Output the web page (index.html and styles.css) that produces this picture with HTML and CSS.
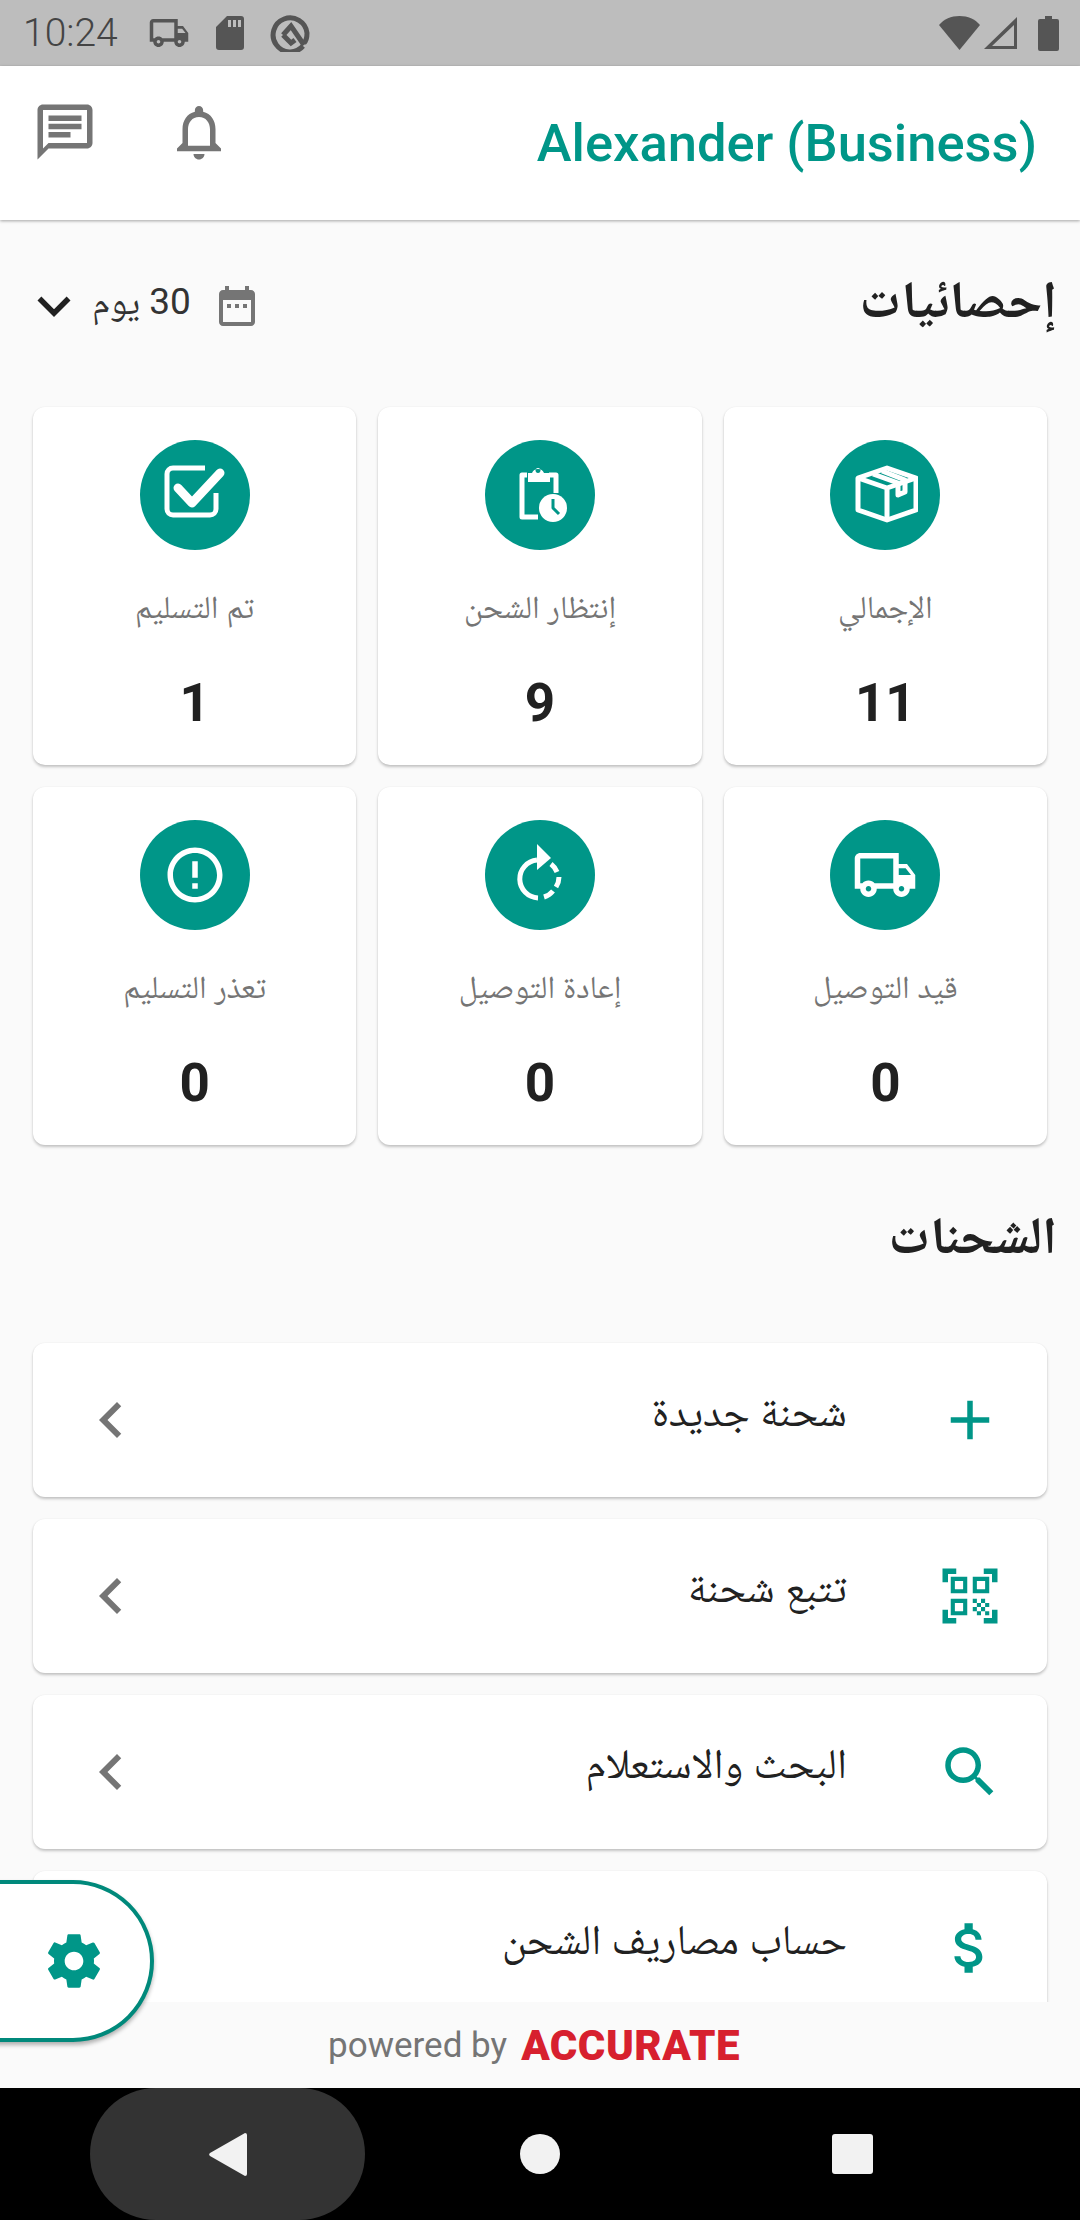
FILE: index.html
```html
<!DOCTYPE html>
<html lang="ar" dir="rtl">
<head>
  <meta charset="UTF-8" />
  <title>Alexander (Business)</title>
  <link rel="stylesheet" href="styles.css">
</head>
<body>
  <div class="status-bar" dir="ltr">
    <span class="status-time">10:24</span>
    <svg class="st-truck" viewBox="0 0 24 24"><path d="M20 8h-3V4H3c-1.1 0-2 .9-2 2v11h2c0 1.66 1.34 3 3 3s3-1.34 3-3h6c0 1.66 1.34 3 3 3s3-1.34 3-3h2v-5l-3-4zm-.5 1.5l1.96 2.5H17V9.5h2.5zM6 18c-.55 0-1-.45-1-1s.45-1 1-1 1 .45 1 1-.45 1-1 1zm2.22-3c-.55-.61-1.33-1-2.22-1s-1.67.39-2.22 1H3V6h12v9H8.22zM18 18c-.55 0-1-.45-1-1s.45-1 1-1 1 .45 1 1-.45 1-1 1z"/></svg>
    <svg class="st-sd" viewBox="0 0 28 34"><path d="M11 0h14a3 3 0 0 1 3 3v28a3 3 0 0 1-3 3H3a3 3 0 0 1-3-3V11zM12 4v7h3V4zm5 0v7h3V4zm5 0v7h3V4z" fill-rule="evenodd"/></svg>
    <svg class="st-at" viewBox="0 0 40 38"><g fill="none" stroke-width="5"><path d="M33 32A17 17 0 1 1 37 19c0 5-1 8-3 10"/><path d="M13 21L21 12L34 31M13 21L21 29L25 26"/></g></svg>
    <span class="status-gap"></span>
    <svg class="st-wifi" viewBox="0 0 41 34"><path d="M20.5 34L0 9C5 3 12 0 20.5 0S36 3 41 9z"/></svg>
    <svg class="st-signal" viewBox="0 0 33 32"><path d="M33 0v32H0zM30 8L8 29h22z" fill-rule="evenodd"/></svg>
    <svg class="st-battery" viewBox="0 0 21 35"><path d="M7 0h7v3h5a2 2 0 0 1 2 2v28a2 2 0 0 1-2 2H2a2 2 0 0 1-2-2V5a2 2 0 0 1 2-2h5z"/></svg>
  </div>

  <header class="app-header">
    <h1 class="app-title" dir="ltr">Alexander (Business)</h1>
    <div class="header-icons" dir="ltr">
      <svg class="icon-66 grey" viewBox="0 0 24 24"><path d="M20 2H4c-1.1 0-2 .9-2 2v18l4-4h14c1.1 0 2-.9 2-2V4c0-1.1-.9-2-2-2zm0 14H6l-2 2V4h16v12z"/><path d="M6 6h12v2H6zm0 3h12v2H6zm0 3h8v2H6z"/></svg>
      <svg class="icon-66 grey" viewBox="0 0 24 24"><path d="M12 22c1.1 0 2-.9 2-2h-4c0 1.1.9 2 2 2zm6-6v-5c0-3.07-1.63-5.64-4.5-6.32V4c0-.83-.67-1.5-1.5-1.5s-1.5.67-1.5 1.5v.68C7.64 5.36 6 7.92 6 11v5l-2 2v1h16v-1l-2-2zm-2 1H8v-6c0-2.48 1.51-4.5 4-4.5s4 2.02 4 4.5v6z"/></svg>
    </div>
  </header>

  <main class="content">
    <div class="section-head stats-head">
      <h2 class="section-title">إحصائيات</h2>
      <div class="range">
        <svg class="icon-48 grey" viewBox="0 0 24 24"><path d="M9 11H7v2h2v-2zm4 0h-2v2h2v-2zm4 0h-2v2h2v-2zm2-7h-1V2h-2v2H8V2H6v2H5c-1.11 0-1.99.9-1.99 2L3 20c0 1.1.89 2 2 2h14c1.1 0 2-.9 2-2V6c0-1.1-.9-2-2-2zm0 16H5V9h14v11z"/></svg>
        <span class="range-text">30 يوم</span>
        <svg class="icon-66 dark" viewBox="0 0 24 24"><path d="M7.41 8.59L12 13.17l4.59-4.58L18 10l-6 6-6-6 1.41-1.41z"/></svg>
      </div>
    </div>

    <div class="stats-grid">
      <div class="stat-card">
        <div class="stat-circle">
          <svg class="icon-66 line" viewBox="0 0 66 66"><path d="M35 6L64 16V48L35 58L6 48V16z"/><path d="M6 16L35 26L64 16M35 26V58"/><path d="M21 12L46 21V33L53 30V18L30 9"/></svg>
        </div>
        <div class="stat-label">الإجمالي</div>
        <div class="stat-num">11</div>
      </div>
      <div class="stat-card">
        <div class="stat-circle">
          <svg class="icon-66 line" viewBox="0 0 66 66"><path d="M20 13H15V55H31"/><path d="M42 13H49V31"/><path class="solid" d="M21 11h4a6.5 6.5 0 0 1 12 0h6v9H21zM31 6a2.5 2.5 0 1 0 .01 0z" fill-rule="evenodd"/><circle class="solid" cx="46" cy="46" r="14"/><path class="hand" d="M46 37V46L52 52"/></svg>
        </div>
        <div class="stat-label">إنتظار الشحن</div>
        <div class="stat-num">9</div>
      </div>
      <div class="stat-card">
        <div class="stat-circle">
          <svg class="icon-66 line" viewBox="0 0 66 66"><path d="M43 6H11A6 6 0 0 0 5 12V47A6 6 0 0 0 11 53H48A6 6 0 0 0 54 47V31"/><path class="check" d="M16 26L30 41L58 11"/></svg>
        </div>
        <div class="stat-label">تم التسليم</div>
        <div class="stat-num">1</div>
      </div>
      <div class="stat-card">
        <div class="stat-circle">
          <svg class="icon-66 white" viewBox="0 0 24 24"><path d="M20 8h-3V4H3c-1.1 0-2 .9-2 2v11h2c0 1.66 1.34 3 3 3s3-1.34 3-3h6c0 1.66 1.34 3 3 3s3-1.34 3-3h2v-5l-3-4zm-.5 1.5l1.96 2.5H17V9.5h2.5zM6 18c-.55 0-1-.45-1-1s.45-1 1-1 1 .45 1 1-.45 1-1 1zm2.22-3c-.55-.61-1.33-1-2.22-1s-1.67.39-2.22 1H3V6h12v9H8.22zM18 18c-.55 0-1-.45-1-1s.45-1 1-1 1 .45 1 1-.45 1-1 1z"/></svg>
        </div>
        <div class="stat-label">قيد التوصيل</div>
        <div class="stat-num">0</div>
      </div>
      <div class="stat-card">
        <div class="stat-circle">
          <svg class="icon-66 line" viewBox="0 0 66 66"><path d="M30 18A19 19 0 0 0 31 55.9"/><path class="solid" d="M30 2L44 16L30 28z"/><path d="M44 22A19 19 0 0 1 50 30M52 35A19 19 0 0 1 49 45M46 49A19 19 0 0 1 37 55"/></svg>
        </div>
        <div class="stat-label">إعادة التوصيل</div>
        <div class="stat-num">0</div>
      </div>
      <div class="stat-card">
        <div class="stat-circle">
          <svg class="icon-66 white" viewBox="0 0 24 24"><path d="M11 15h2v2h-2zm0-8h2v6h-2zm.99-5C6.47 2 2 6.48 2 12s4.47 10 9.99 10C17.52 22 22 17.52 22 12S17.52 2 11.99 2zM12 20c-4.42 0-8-3.58-8-8s3.58-8 8-8 8 3.58 8 8-3.58 8-8 8z"/></svg>
        </div>
        <div class="stat-label">تعذر التسليم</div>
        <div class="stat-num">0</div>
      </div>
    </div>

    <div class="section-head ships-head">
      <h2 class="section-title">الشحنات</h2>
    </div>

    <div class="menu-list">
      <div class="menu-row">
        <svg class="icon-66 teal" viewBox="0 0 24 24"><path d="M19 13h-6v6h-2v-6H5v-2h6V5h2v6h6v2z"/></svg>
        <span class="menu-text">شحنة جديدة</span>
        <svg class="chevron" viewBox="0 0 24 24"><path d="M15.41 16.59L10.83 12l4.58-4.59L14 6l-6 6 6 6 1.41-1.41z"/></svg>
      </div>
      <div class="menu-row">
        <svg class="icon-66 teal" viewBox="0 0 24 24"><path d="M9.5 6.5v3h-3v-3h3M11 5H5v6h6V5zm-1.5 9.5v3h-3v-3h3M11 13H5v6h6v-6zm6.5-6.5v3h-3v-3h3M19 5h-6v6h6V5zm-6 8h1.5v1.5H13V13zm1.5 1.5H16V16h-1.5v-1.5zM16 13h1.5v1.5H16V13zm-3 3h1.5v1.5H13V16zm1.5 1.5H16V19h-1.5v-1.5zM16 16h1.5v1.5H16V16zm1.5-1.5H19V16h-1.5v-1.5zm0 3H19V19h-1.5v-1.5zM22 7h-2V4h-3V2h5v5zm0 15v-5h-2v3h-3v2h5zM2 22h5v-2H4v-3H2v5zM2 2v5h2V4h3V2H2z"/></svg>
        <span class="menu-text">تتبع شحنة</span>
        <svg class="chevron" viewBox="0 0 24 24"><path d="M15.41 16.59L10.83 12l4.58-4.59L14 6l-6 6 6 6 1.41-1.41z"/></svg>
      </div>
      <div class="menu-row">
        <svg class="icon-66 teal" viewBox="0 0 24 24"><path d="M15.5 14h-.79l-.28-.27C15.41 12.59 16 11.11 16 9.5 16 5.91 13.09 3 9.5 3S3 5.91 3 9.5 5.91 16 9.5 16c1.61 0 3.09-.59 4.23-1.57l.27.28v.79l5 4.99L20.49 19l-4.99-5zm-6 0C7.01 14 5 11.99 5 9.5S7.01 5 9.5 5 14 7.01 14 9.5 11.99 14 9.5 14z"/></svg>
        <span class="menu-text">البحث والاستعلام</span>
        <svg class="chevron" viewBox="0 0 24 24"><path d="M15.41 16.59L10.83 12l4.58-4.59L14 6l-6 6 6 6 1.41-1.41z"/></svg>
      </div>
      <div class="menu-row">
        <svg class="icon-66 teal" viewBox="0 0 24 24"><path d="M11.8 10.9c-2.27-.59-3-1.2-3-2.15 0-1.09 1.01-1.85 2.7-1.85 1.78 0 2.44.85 2.5 2.1h2.21c-.07-1.72-1.12-3.3-3.21-3.81V3h-3v2.16c-1.94.42-3.5 1.68-3.5 3.61 0 2.31 1.91 3.46 4.7 4.13 2.5.6 3 1.48 3 2.41 0 .69-.49 1.79-2.7 1.79-2.06 0-2.87-.92-2.98-2.1h-2.2c.12 2.19 1.76 3.42 3.68 3.83V21h3v-2.15c1.95-.37 3.5-1.5 3.5-3.55 0-2.84-2.43-3.81-4.7-4.4z"/></svg>
        <span class="menu-text">حساب مصاريف الشحن</span>
        <svg class="chevron" viewBox="0 0 24 24"><path d="M15.41 16.59L10.83 12l4.58-4.59L14 6l-6 6 6 6 1.41-1.41z"/></svg>
      </div>
    </div>
  </main>

  <div class="settings-tab" dir="ltr">
    <svg class="icon-64" viewBox="0 0 24 24"><path d="M19.43 12.98c.04-.32.07-.64.07-.98s-.03-.66-.07-.98l2.11-1.65c.19-.15.24-.42.12-.64l-2-3.46c-.12-.22-.39-.3-.61-.22l-2.49 1c-.52-.4-1.08-.73-1.69-.98l-.38-2.65C14.46 2.18 14.25 2 14 2h-4c-.25 0-.46.18-.49.42l-.38 2.65c-.61.25-1.17.59-1.69.98l-2.49-1c-.23-.09-.49 0-.61.22l-2 3.46c-.13.22-.07.49.12.64l2.11 1.65c-.04.32-.07.65-.07.98s.03.66.07.98l-2.11 1.65c-.19.15-.24.42-.12.64l2 3.46c.12.22.39.3.61.22l2.49-1c.52.4 1.08.73 1.69.98l.38 2.65c.03.24.24.42.49.42h4c.25 0 .46-.18.49-.42l.38-2.65c.61-.25 1.17-.59 1.69-.98l2.49 1c.23.09.49 0 .61-.22l2-3.46c.12-.22.07-.49-.12-.64l-2.11-1.65zM12 15.5c-1.93 0-3.5-1.57-3.5-3.5s1.57-3.5 3.5-3.5 3.5 1.57 3.5 3.5-1.57 3.5-3.5 3.5z"/></svg>
  </div>

  <footer class="powered" dir="ltr">
    <span class="powered-text">powered by</span>
    <span class="powered-logo">ACCURATE</span>
  </footer>

  <nav class="nav-bar" dir="ltr">
    <div class="nav-item nav-back"><svg class="nav-tri" viewBox="0 0 38 43"><path d="M36 0a2 2 0 0 1 2 2v39a2 2 0 0 1-2 2L1 23a2 2 0 0 1 0-3z"/></svg></div>
    <div class="nav-item"><span class="nav-dot"></span></div>
    <div class="nav-item"><span class="nav-square"></span></div>
  </nav>
</body>
</html>
```

FILE: styles.css
```css
* {
  box-sizing: border-box;
}
html, body {
  margin: 0;
  padding: 0;
}
body {
  position: relative;
  width: 1080px;
  height: 2220px;
  overflow: hidden;
  display: flex;
  flex-direction: column;
  background: #fafafa;
  font-family: Roboto, "Noto Naskh Arabic", sans-serif;
}
svg {
  display: block;
  flex: none;
}
.icon-66 { width: 66px; height: 66px; }
.icon-64 { width: 64px; height: 64px; fill: #009688; }
.icon-48 { width: 48px; height: 48px; }
.grey { fill: #757575; }
.dark { fill: #212121; }
.teal { fill: #009688; }
.white { fill: #fff; }

/* status bar */
.status-bar {
  height: 66px;
  flex: none;
  background: #bdbdbd;
  display: flex;
  align-items: center;
  padding: 0 21px 0 23px;
  fill: #555;
  stroke: #555;
  stroke-width: 0;
}
.status-time {
  font-size: 39px;
  font-weight: 300;
  color: #444;
  width: 100px;
}
.st-truck { width: 42px; height: 42px; margin-left: 25px; }
.st-sd { width: 28px; height: 34px; margin-left: 26px; }
.st-at { width: 40px; height: 38px; margin-left: 26px; stroke-width: 5; }
.status-gap { flex: 1; }
.st-wifi { width: 41px; height: 34px; }
.st-signal { width: 33px; height: 32px; margin-left: 4px; }
.st-battery { width: 21px; height: 35px; margin-left: 21px; }

/* top header */
.app-header {
  height: 154px;
  flex: none;
  background: #fff;
  display: flex;
  align-items: center;
  padding: 0 43px 0 32px;
  box-shadow: 0 1px 3px rgba(0, 0, 0, 0.35);
  position: relative;
  z-index: 2;
}
.app-title {
  margin: 0;
  font-size: 52.5px;
  font-weight: 500;
  color: #009688;
}
.header-icons {
  margin-right: auto;
  margin-bottom: 22px;
  display: flex;
  gap: 68px;
}

/* scrolling part */
.content {
  flex: 1;
  min-height: 0;
  overflow: hidden;
  padding: 0 33px;
}
.section-head {
  display: flex;
  align-items: center;
  margin: 0 -10px 0 -12px;
}
.stats-head {
  height: 187px;
  padding-bottom: 16px;
}
.ships-head {
  height: 198px;
  padding-bottom: 6px;
}
.section-title {
  margin: 0;
  font-size: 52px;
  font-weight: 700;
  color: #212121;
}
.range {
  margin-right: auto;
  display: flex;
  align-items: center;
}
.range-text {
  font-size: 37px;
  color: #333;
  margin-right: 22px;
  margin-left: 5px;
}

/* stat cards */
.stats-grid {
  display: grid;
  grid-template-columns: repeat(3, 1fr);
  gap: 22px;
}
.stat-card {
  height: 358px;
  background: #fff;
  border-radius: 12px;
  box-shadow: 0 2px 3px rgba(0, 0, 0, 0.22), 0 0 2px rgba(0, 0, 0, 0.06);
  display: flex;
  flex-direction: column;
  align-items: center;
  padding-top: 33px;
}
.stat-circle {
  width: 110px;
  height: 110px;
  border-radius: 50%;
  background: #009688;
  display: flex;
  align-items: center;
  justify-content: center;
}
.line {
  fill: none;
  stroke: #fff;
  stroke-width: 5;
  stroke-linejoin: round;
}
.line .solid {
  fill: #fff;
  stroke: none;
}
.line .hand {
  stroke: #009688;
  stroke-width: 3;
}
.line .check {
  stroke-width: 9;
  stroke-linecap: round;
}
.stat-label {
  margin-top: 37px;
  height: 40px;
  line-height: 40px;
  font-size: 32px;
  color: #757575;
}
.stat-num {
  margin-top: 46px;
  height: 60px;
  line-height: 60px;
  font-size: 53px;
  font-weight: 700;
  color: #212121;
}

/* menu rows */
.menu-list {
  display: flex;
  flex-direction: column;
  gap: 22px;
}
.menu-row {
  height: 154px;
  flex: none;
  background: #fff;
  border-radius: 12px;
  box-shadow: 0 2px 3px rgba(0, 0, 0, 0.22), 0 0 2px rgba(0, 0, 0, 0.06);
  display: flex;
  align-items: center;
  padding: 0 44px 0 42px;
}
.menu-text {
  font-size: 42px;
  color: #212121;
  margin-right: 90px;
  margin-bottom: 6px;
}
.chevron {
  width: 72px;
  height: 72px;
  fill: #757575;
  margin-right: auto;
}

/* floating settings tab */
.settings-tab {
  position: absolute;
  left: -10px;
  top: 1880px;
  width: 164px;
  height: 162px;
  background: #fff;
  border: 4px solid #00897b;
  border-radius: 0 81px 81px 0;
  box-shadow: 0 3px 4px rgba(0, 0, 0, 0.3);
  z-index: 3;
  display: flex;
  align-items: center;
  padding-left: 48px;
}

/* footer */
.powered {
  height: 86px;
  flex: none;
  display: flex;
  align-items: center;
  justify-content: center;
  gap: 14px;
  padding-right: 12px;
  background: #fafafa;
}
.powered-text {
  font-size: 35px;
  color: #757575;
}
.powered-logo {
  font-size: 42px;
  font-weight: 900;
  letter-spacing: 0.5px;
  color: #d7202e;
}

/* android nav */
.nav-bar {
  height: 132px;
  flex: none;
  background: #000;
  display: flex;
  justify-content: space-between;
  padding: 0 90px;
}
.nav-item {
  width: 275px;
  display: flex;
  align-items: center;
  justify-content: center;
}
.nav-back {
  background: #333;
  border-radius: 66px;
}
.nav-tri {
  width: 38px;
  height: 43px;
  fill: #f2f2f2;
}
.nav-dot {
  width: 40px;
  height: 40px;
  border-radius: 50%;
  background: #f2f2f2;
}
.nav-square {
  width: 41px;
  height: 40px;
  border-radius: 3px;
  background: #f2f2f2;
}
```
